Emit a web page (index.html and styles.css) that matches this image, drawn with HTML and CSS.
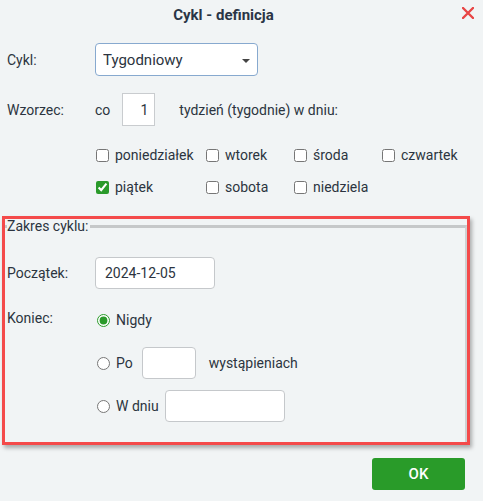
FILE: index.html
```html
<!DOCTYPE html>
<html lang="pl">
<head>
    <meta charset="UTF-8">
    <meta name="viewport" content="width=device-width, initial-scale=1.0">
    <title>Cykl - definicja</title>
    <link rel="stylesheet" href="styles.css">
</head>
<body>
    <div class="dialog">
        <!-- Header -->
        <div class="dialog-header">
            <h1>Cykl - definicja</h1>
            <span class="close">
                <svg width="12" height="12" viewBox="0 0 12 12"><path d="M1 1L11 11M11 1L1 11" stroke="#e84545" stroke-width="2.4" stroke-linecap="round"/></svg>
            </span>
        </div>

        <div class="dialog-body">
            <!-- Cykl -->
            <div class="row">
                <label class="label" for="cykl">Cykl:</label>
                <div class="select-wrap">
                    <select id="cykl">
                        <option>Tygodniowy</option>
                        <option>Dzienny</option>
                        <option>Miesięczny</option>
                    </select>
                </div>
            </div>

            <!-- Wzorzec -->
            <div class="row pattern">
                <span class="label">Wzorzec:</span>
                <span>co</span>
                <input type="text" class="num" value="1">
                <span>tydzień (tygodnie) w dniu:</span>
            </div>

            <div class="days">
                <label class="day"><input type="checkbox"> poniedziałek</label>
                <label class="day"><input type="checkbox"> wtorek</label>
                <label class="day"><input type="checkbox"> środa</label>
                <label class="day"><input type="checkbox"> czwartek</label>
                <label class="day"><input type="checkbox" checked> piątek</label>
                <label class="day"><input type="checkbox"> sobota</label>
                <label class="day"><input type="checkbox"> niedziela</label>
            </div>

            <!-- Zakres cyklu -->
            <div class="highlight">
                <fieldset class="range">
                    <legend>Zakres cyklu:</legend>

                    <div class="row start">
                        <span class="label">Początek:</span>
                        <input type="text" class="date" value="2024-12-05">
                    </div>

                    <div class="row end">
                        <span class="label top">Koniec:</span>
                        <div class="options">
                            <label class="option"><input type="radio" name="koniec" checked> Nigdy</label>
                            <label class="option"><input type="radio" name="koniec"> Po <input type="text" class="count"> <span class="after">wystąpieniach</span></label>
                            <label class="option"><input type="radio" name="koniec"> W dniu <input type="text" class="date"></label>
                        </div>
                    </div>
                </fieldset>
            </div>

            <div class="actions">
                <button class="btn">OK</button>
            </div>
        </div>
    </div>
</body>
</html>
```

FILE: styles.css
```css
/* Reset & Global Styling */
* {
    margin: 0;
    padding: 0;
    box-sizing: border-box;
}
body {
    font-family: Roboto, "Liberation Sans", Arial, sans-serif;
    font-size: 14px;
    background-color: #f1f4f5;
    color: #2c3440;
}
input, select, button {
    font-family: inherit;
    font-size: 14px;
    color: inherit;
}
input[type="checkbox"], input[type="radio"] {
    width: 13px;
    height: 13px;
    margin: 0;
    accent-color: #2a9a2a;
}

/* Header */
.dialog-header {
    position: relative;
    height: 30px;
    padding-right: 36px;
    text-align: center;
}
.dialog-header h1 {
    font-size: 15px;
    font-weight: 700;
    line-height: 30px;
    color: #2a3546;
}
.close {
    position: absolute;
    top: 7px;
    right: 9px;
    display: flex;
}

/* Body */
.dialog-body {
    padding: 13px 0 0;
}
.row {
    display: flex;
    align-items: center;
    padding-left: 7px;
}
.label {
    width: 88px;
    flex-shrink: 0;
}

/* Select */
.select-wrap {
    position: relative;
    width: 163px;
}
.select-wrap select {
    appearance: none;
    width: 100%;
    height: 33px;
    padding: 0 7px;
    font-size: 15px;
    background: #fff;
    border: 1px solid #87a9cf;
    border-radius: 4px;
}
.select-wrap::after {
    content: "";
    position: absolute;
    right: 8px;
    top: 16px;
    border-left: 4px solid transparent;
    border-right: 4px solid transparent;
    border-top: 4px solid #444;
}

/* Wzorzec */
.pattern {
    margin-top: 17px;
}
.num {
    width: 33px;
    height: 33px;
    margin: 0 24px 0 12px;
    padding: 0 6px;
    text-align: right;
    background: #fff;
    border: 1px solid #c9cccf;
}

/* Days */
.days {
    display: grid;
    grid-template-columns: 110px 88px 88px auto;
    grid-auto-rows: 32px;
    margin: 13px 0 0 96px;
}
.day {
    display: flex;
    align-items: center;
    gap: 6px;
}

/* Zakres cyklu */
.highlight {
    margin: 13px 13px 0 2px;
    border: 3px solid #f44a4a;
    box-shadow: 2px 3px 4px rgba(0, 0, 0, 0.3);
}
.range {
    border: none;
    border-top: 3px solid #c6c8c9;
    border-right: 2px solid #cfd1d2;
    padding: 0 0 20px 2px;
}
.range legend {
    line-height: 14px;
    padding: 0 2px 0 0;
}
.start {
    margin-top: 24px;
    padding-left: 0;
}
.date {
    width: 120px;
    height: 32px;
    padding: 0 9px;
    background: #fff;
    border: 1px solid #c5c8cb;
    border-radius: 4px;
}
.end {
    align-items: flex-start;
    margin-top: 15px;
    padding-left: 0;
}
.label.top {
    line-height: 16px;
    padding-top: 6px;
}
.options {
    display: flex;
    flex-direction: column;
    gap: 11px;
    margin-left: 2px;
}
.option {
    display: flex;
    align-items: center;
    height: 32px;
    gap: 6px;
}
.count {
    width: 54px;
    height: 32px;
    margin-left: 3px;
    background: #fff;
    border: 1px solid #c5c8cb;
    border-radius: 4px;
}
.after {
    margin-left: 7px;
}

/* Buttons */
.actions {
    display: flex;
    justify-content: flex-end;
    padding: 13px 18px 0 0;
}
.btn {
    width: 93px;
    height: 32px;
    background-color: #299b29;
    color: #fff;
    font-size: 15px;
    font-weight: 500;
    border: none;
    border-radius: 3px;
    cursor: pointer;
}
```
